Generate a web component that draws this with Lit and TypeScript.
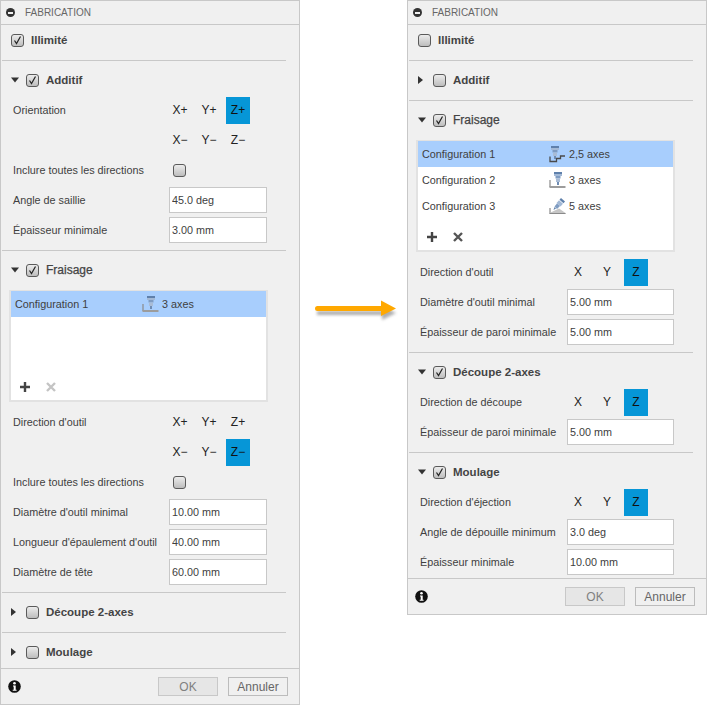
import { LitElement, html, css, svg } from "lit";
import { customElement } from "lit/decorators.js";

const spindle = (x: number) => svg`
  <path d="M${x} 1h8v2H${x}z" fill="#5f80ab"/>
  <path d="M${x} 3h8v2H${x}z" fill="#a3b9d6"/>
  <path d="M${x + 1.5} 5h5v2.500h-5z" fill="#7f9cc2"/>
  <path d="M${x + 2} 7.500h4V11h-4z" fill="#a9bcd6"/>
  <path d="M${x + 3} 11h2v3h-2z" fill="#6f8cb3"/>`;
const mill25 = svg`${spindle(2)}<path d="M1 11.500V16.500H7.500V13.500H11.500V11H16" fill="none" stroke="#4a4a4a" stroke-width="1.300"/>`;
const mill3 = svg`${spindle(5)}<path d="M1 9v7" stroke="#8a8a8a" stroke-width="1.200"/><path d="M0.500 15h16v2H0.500z" fill="#9c9c9c"/>`;
const mill5 = svg`
  <path d="M12 1l4 3.500-1.500 1.800-4-3.500z" fill="#5f80ab"/>
  <path d="M10 3.300l4 3.500-2.500 2.700-4-3.500z" fill="#a3b9d6"/>
  <path d="M8 6.500l3 2.500-3 3-2.500-2.500z" fill="#7f9cc2"/>
  <path d="M5.500 10l1.500 1.500-2.500 1.500z" fill="#5f80ab"/>
  <path d="M1 11v5.500" stroke="#8a8a8a" stroke-width="1.200"/>
  <path d="M0.500 16L10 11.500l6.500 4.500v1H0.500z" fill="#c6c6c6"/>
  <path d="M0.500 16.500h16" stroke="#8a8a8a" stroke-width="1"/>`;
const icons: Record<string, unknown> = { "2,5": mill25, "3": mill3, "5": mill5 };

type Cfg = { name: string; axes: string; sel?: boolean };

@customElement("app-root")
export class AppRoot extends LitElement {
  static styles = css`
    :host { display: block; width: 707px; height: 705px; background: #fff; font-family: "Liberation Sans", Arial, sans-serif; font-size: 10.8px; color: #404040; overflow: hidden; }
    .page { display: flex; align-items: flex-start; }
    .panel { width: 300px; box-sizing: border-box; border: 1px solid #c8c8c8; background: #f0f0f0; flex: none; }
    .title { height: 23px; border-bottom: 1px solid #c8c8c8; display: flex; align-items: center; padding-left: 5px; gap: 10px; color: #666; font-size: 10px; }
    .minus { width: 9px; height: 9px; border-radius: 50%; background: #333; display: flex; align-items: center; justify-content: center; }
    .minus i { width: 5px; height: 2px; background: #f0f0f0; display: block; }
    .section { padding: 4px 0 5px; margin: 0 13px 0 1px; border-bottom: 1px solid #c8c8c8; }
    .section.first { padding-top: 0; }
    .section.last { border-bottom: none; padding-bottom: 1px; margin-bottom: 0; }
    .head { height: 30px; display: flex; align-items: center; padding-left: 9px; font-weight: bold; color: #444; font-size: 11.5px; }
    .head.light { font-weight: normal; font-size: 12px; -webkit-text-stroke: 0.25px #444; }
    .tri { width: 8px; height: 8px; margin-right: 7px; flex: none; }
    .box { width: 13px; height: 13px; box-sizing: border-box; border: 1px solid #5a5a5a; border-radius: 3px; background: linear-gradient(#ececec, #bdbdbd); flex: none; display: block; }
    .box svg { display: block; }
    .head .box { margin-right: 7px; }
    .row { height: 30px; display: flex; align-items: center; padding-left: 11px; white-space: nowrap; }
    .row > .box { margin-left: 4px; }
    .label { width: 156px; flex: none; }
    .wide .label { width: 147px; }
    .input { width: 98px; height: 26px; box-sizing: border-box; border: 1px solid #c8c8c8; background: #fff; padding: 0 2px; font: inherit; color: #404040; margin: 0; outline: none; }
    .wide .input { width: 107px; }
    .axes { display: flex; margin-left: -1px; }
    .axis { width: 24px; height: 27px; display: flex; align-items: center; justify-content: center; margin-right: 5px; color: #222; font-size: 12px; }
    .axis.on { background: #0696d7; color: #111; }
    .list { margin: 5px 18px 5px 7px; height: 112px; box-sizing: border-box; border: solid #e2e2e2; border-width: 1px 2px 2px; background: #fff; display: flex; flex-direction: column; }
    .cfg { height: 26px; flex: none; display: flex; align-items: center; padding-left: 4px; }
    .cfg.sel { background: #a8cefd; }
    .cfg .name { width: 127px; flex: none; }
    .cfg svg { width: 18px; height: 18px; margin-right: 2px; flex: none; }
    .tools { margin-top: auto; height: 26px; display: flex; align-items: center; padding-left: 7px; gap: 13px; }
    .tools svg { display: block; }
    .foot { height: 35px; border-top: 1px solid #c8c8c8; display: flex; align-items: center; padding: 0 11px 0 7px; }
    .info { width: 13px; height: 13px; flex: none; margin-right: auto; }
    .btn { width: 60px; height: 19px; box-sizing: border-box; border: 1px solid #bcbcbc; display: flex; align-items: center; justify-content: center; color: #666; font-size: 12px; margin-left: 10px; }
    .btn.off { background: #e6e6e6; border-color: #c8c8c8; color: #808080; }
    .arrow { width: 107px; height: 40px; flex: none; margin-top: 290px; }
    .arrow svg { display: block; }
  `;

  check(on: boolean) {
    return html`<span class="box">${on ? html`<svg width="11" height="11" viewBox="0 0 11 11"><path d="M2.500 5.500l2 3 4-7" fill="none" stroke="#222" stroke-width="1.200"/></svg>` : ""}</span>`;
  }
  head(name: string, open: boolean, on: boolean, light = false) {
    return html`<div class="head ${light ? "light" : ""}">
      <svg class="tri" viewBox="0 0 8 8">${open ? svg`<path d="M0 1.500h8L4 6.500z" fill="#333"/>` : svg`<path d="M0 0v8L5 4z" fill="#333"/>`}</svg>
      ${this.check(on)}<span>${name}</span></div>`;
  }
  field(label: string, value: string) {
    return html`<div class="row"><span class="label">${label}</span><input class="input" readonly .value=${value} /></div>`;
  }
  axes(labels: string[], on: string) {
    return html`<div class="axes">${labels.map((l) => html`<span class="axis ${l === on ? "on" : ""}">${l}</span>`)}</div>`;
  }
  axisRow(label: string, labels: string[], on: string) {
    return html`<div class="row"><span class="label">${label}</span>${this.axes(labels, on)}</div>`;
  }
  checkRow(label: string) {
    return html`<div class="row"><span class="label">${label}</span>${this.check(false)}</div>`;
  }
  list(rows: Cfg[], del: string) {
    return html`<div class="list">
      ${rows.map((r) => html`<div class="cfg ${r.sel ? "sel" : ""}"><span class="name">${r.name}</span><svg viewBox="0 0 18 18">${icons[r.axes.split(" ")[0]]}</svg><span>${r.axes}</span></div>`)}
      <div class="tools">
        <svg width="14" height="14" viewBox="0 0 14 14"><path d="M7 2v10M2 7h10" stroke="#444" stroke-width="2.400"/></svg>
        <svg width="12" height="12" viewBox="0 0 12 12"><path d="M2 2l8 8M10 2l-8 8" stroke="${del}" stroke-width="2.400"/></svg>
      </div></div>`;
  }
  chrome(content: unknown) {
    return html`<div class="title"><span class="minus"><i></i></span><span>FABRICATION</span></div>
      ${content}
      <div class="foot">
        <svg class="info" viewBox="0 0 13 13"><circle cx="6.500" cy="6.500" r="6.300" fill="#111"/><circle cx="6.500" cy="3.300" r="1.300" fill="#fff"/><path d="M5 5.500h2.700v4.200h.9v1.100H4.700V9.700h1V6.600H5z" fill="#fff"/></svg>
        <span class="btn off">OK</span><span class="btn">Annuler</span>
      </div>`;
  }
  render() {
    const plus = ["X+", "Y+", "Z+"];
    const minus = ["X−", "Y−", "Z−"];
    const xyz = ["X", "Y", "Z"];
    return html`<div class="page">
      <div class="panel">${this.chrome(html`
        <div class="section first"><div class="head">${this.check(true)}<span>Illimité</span></div></div>
        <div class="section">
          ${this.head("Additif", true, true)}
          ${this.axisRow("Orientation", plus, "Z+")}
          ${this.axisRow("", minus, "")}
          ${this.checkRow("Inclure toutes les directions")}
          ${this.field("Angle de saillie", "45.0 deg")}
          ${this.field("Épaisseur minimale", "3.00 mm")}
        </div>
        <div class="section">
          ${this.head("Fraisage", true, true, true)}
          ${this.list([{ name: "Configuration 1", axes: "3 axes", sel: true }], "#c4c4c4")}
          ${this.axisRow("Direction d'outil", plus, "")}
          ${this.axisRow("", minus, "Z−")}
          ${this.checkRow("Inclure toutes les directions")}
          ${this.field("Diamètre d'outil minimal", "10.00 mm")}
          ${this.field("Longueur d'épaulement d'outil", "40.00 mm")}
          ${this.field("Diamètre de tête", "60.00 mm")}
        </div>
        <div class="section">${this.head("Découpe 2-axes", false, false)}</div>
        <div class="section last">${this.head("Moulage", false, false)}</div>
      `)}</div>
      <div class="arrow">
        <svg width="107" height="40" viewBox="0 0 107 40">
          <defs><filter id="s" x="-10%" y="-60%" width="120%" height="250%"><feGaussianBlur stdDeviation="1.500"/></filter></defs>
          <path d="M17 21h65v-5l14 7-14 7v-5H17z" fill="#777" opacity=".6" filter="url(#s)"/>
          <path d="M17.500 16h63.500V10.500l15 8-15 7.500V21H17.500a2.500 2.500 0 0 1 0-5z" fill="#ffa800"/>
        </svg>
      </div>
      <div class="panel wide">${this.chrome(html`
        <div class="section first"><div class="head">${this.check(false)}<span>Illimité</span></div></div>
        <div class="section">${this.head("Additif", false, false)}</div>
        <div class="section">
          ${this.head("Fraisage", true, true, true)}
          ${this.list([
            { name: "Configuration 1", axes: "2,5 axes", sel: true },
            { name: "Configuration 2", axes: "3 axes" },
            { name: "Configuration 3", axes: "5 axes" },
          ], "#555")}
          ${this.axisRow("Direction d'outil", xyz, "Z")}
          ${this.field("Diamètre d'outil minimal", "5.00 mm")}
          ${this.field("Épaisseur de paroi minimale", "5.00 mm")}
        </div>
        <div class="section">
          ${this.head("Découpe 2-axes", true, true)}
          ${this.axisRow("Direction de découpe", xyz, "Z")}
          ${this.field("Épaisseur de paroi minimale", "5.00 mm")}
        </div>
        <div class="section last">
          ${this.head("Moulage", true, true)}
          ${this.axisRow("Direction d'éjection", xyz, "Z")}
          ${this.field("Angle de dépouille minimum", "3.0 deg")}
          ${this.field("Épaisseur minimale", "10.00 mm")}
        </div>
      `)}</div>
    </div>`;
  }
}
